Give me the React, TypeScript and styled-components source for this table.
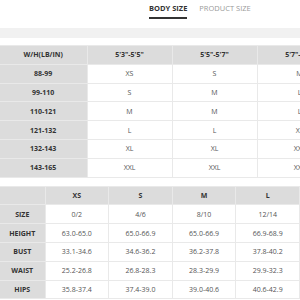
import styled, { createGlobalStyle } from "styled-components";

const GlobalStyle = createGlobalStyle`
  html, body {
    margin: 0;
    padding: 0;
    background: #ffffff;
    overflow: hidden;
  }
  body {
    font-family: "Open Sans", "Liberation Sans", sans-serif;
  }
`;

const heightCols = [`5'3"-5'5"`, `5'5"-5'7"`, `5'7"-5'9"`, `5'9"-5'11"`];

const heightRows = [
  { range: "88-99", sizes: ["XS", "S", "M", "L"] },
  { range: "99-110", sizes: ["S", "M", "L", "L"] },
  { range: "110-121", sizes: ["M", "M", "L", "XL"] },
  { range: "121-132", sizes: ["L", "L", "XL", "XL"] },
  { range: "132-143", sizes: ["XL", "XL", "XXL", "XXL"] },
  { range: "143-165", sizes: ["XXL", "XXL", "XXL", "XXL"] },
];

const sizeCols = ["XS", "S", "M", "L"];

const measureRows = [
  { label: "SIZE", values: ["0/2", "4/6", "8/10", "12/14"] },
  { label: "HEIGHT", values: ["63.0-65.0", "65.0-66.9", "65.0-66.9", "66.9-68.9"] },
  { label: "BUST", values: ["33.1-34.6", "34.6-36.2", "36.2-37.8", "37.8-40.2"] },
  { label: "WAIST", values: ["25.2-26.8", "26.8-28.3", "28.3-29.9", "29.9-32.3"] },
  { label: "HIPS", values: ["35.8-37.4", "37.4-39.0", "39.0-40.6", "40.6-42.9"] },
];

const App = () => {
  return (
    <>
      <GlobalStyle />
      <Page>
        <Tabs>
          <Tab $active>BODY SIZE</Tab>
          <Tab>PRODUCT SIZE</Tab>
        </Tabs>
        <Band />
        {/* the height chart is wider than the window, like the original */}
        <ChartTable $width={427}>
          <colgroup>
            <col style={{ width: 87 }} />
            {heightCols.map((c) => (
              <col key={c} style={{ width: 85 }} />
            ))}
          </colgroup>
          <thead>
            <tr>
              <HeadCell>W/H(LB/IN)</HeadCell>
              {heightCols.map((c) => (
                <HeadCell key={c}>{c}</HeadCell>
              ))}
            </tr>
          </thead>
          <tbody>
            {heightRows.map((row) => (
              <tr key={row.range}>
                <LabelCell>{row.range}</LabelCell>
                {row.sizes.map((s, i) => (
                  <DataCell key={i}>{s}</DataCell>
                ))}
              </tr>
            ))}
          </tbody>
        </ChartTable>
        <Spacer />
        <ChartTable $width={300}>
          <colgroup>
            <col style={{ width: 45 }} />
            {sizeCols.map((c) => (
              <col key={c} />
            ))}
          </colgroup>
          <thead>
            <tr>
              <HeadCell />
              {sizeCols.map((c) => (
                <HeadCell key={c}>{c}</HeadCell>
              ))}
            </tr>
          </thead>
          <tbody>
            {measureRows.map((row) => (
              <tr key={row.label}>
                <LabelCell>{row.label}</LabelCell>
                {row.values.map((v, i) => (
                  <DataCell key={i}>{v}</DataCell>
                ))}
              </tr>
            ))}
          </tbody>
        </ChartTable>
      </Page>
    </>
  );
};

export default App;

const Page = styled.div`
  width: 300px;
  height: 300px;
  overflow: hidden;
`;

const Tabs = styled.div`
  display: flex;
  gap: 12px;
  padding-left: 149px;
  height: 28px;
`;

const Tab = styled.div<{ $active?: boolean }>`
  font-size: 7.5px;
  line-height: 10px;
  padding: 3px 0 4px;
  height: 10px;
  white-space: nowrap;
  font-weight: ${(p) => (p.$active ? 700 : 400)};
  color: ${(p) => (p.$active ? "#333333" : "#9a9a9a")};
  border-bottom: 2px solid ${(p) => (p.$active ? "#333333" : "transparent")};
`;

const Band = styled.div`
  height: 10px;
  background: #f1f1f1;
  margin-bottom: 7px;
`;

const Spacer = styled.div`
  height: 8px;
`;

const ChartTable = styled.table<{ $width: number }>`
  width: ${(p) => p.$width}px;
  min-width: ${(p) => p.$width}px;
  border-collapse: collapse;
  table-layout: fixed;
  font-size: 7px;
  text-align: center;

  td,
  th {
    height: 17.8px;
    padding: 0;
    border: 1px solid #e9e9e9;
    vertical-align: middle;
    white-space: nowrap;
    overflow: hidden;
  }
  tr > :first-child {
    border-left: none;
  }
`;

const HeadCell = styled.th`
  background: #dcdcdc;
  color: #333333;
  font-weight: 700;
`;

const LabelCell = styled.td`
  background: #dcdcdc;
  color: #333333;
  font-weight: 700;
`;

const DataCell = styled.td`
  background: #ffffff;
  color: #555555;
  font-weight: 400;
`;
